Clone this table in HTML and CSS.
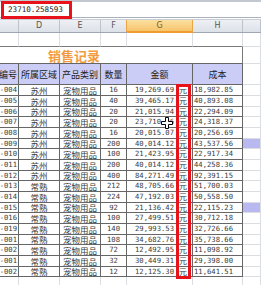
FILE: index.html
```html
<!DOCTYPE html>
<html>
<head>
<meta charset="utf-8">
<link rel="stylesheet" href="styles.css">
</head>
<body>
<div class="app">
  <div class="fbar"><span class="ftext">23710.258593</span></div>
  <div class="sheet">
    <div class="row colhdr">
      <div class="ch"></div><div class="ch">D</div><div class="ch">E</div><div class="ch pre">F</div><div class="ch sel">G</div><div class="ch">H</div><div class="ch"></div>
    </div>
    <div class="row blank">
      <div class="b"></div><div class="b"></div><div class="b"></div><div class="b"></div><div class="b"></div><div class="b"></div><div class="b lx"></div>
    </div>
    <div class="row titlerow">
      <div class="title">销售记录</div><div class="x"></div>
    </div>
    <div class="row thead">
      <div class="c">订单编号</div><div>所属区域</div><div>产品类别</div><div>数量</div><div>金额</div><div>成本</div><div class="x"></div>
    </div>
    <div class="tbody">
      <div class="row d"><div class="c">XS20-004</div><div class="r">苏州</div><div class="p">宠物用品</div><div class="q">16</div><div class="g"><span>19,269.69</span><i>元</i></div><div class="h">18,982.85</div><div class="x"></div></div>
      <div class="row d"><div class="c">XS20-005</div><div class="r">苏州</div><div class="p">宠物用品</div><div class="q">40</div><div class="g"><span>39,465.17</span><i>元</i></div><div class="h">40,893.08</div><div class="x"></div></div>
      <div class="row d"><div class="c">XS20-006</div><div class="r">苏州</div><div class="p">宠物用品</div><div class="q">20</div><div class="g"><span>21,015.94</span><i>元</i></div><div class="h">22,294.09</div><div class="x"></div></div>
      <div class="row d"><div class="c">XS20-007</div><div class="r">苏州</div><div class="p">宠物用品</div><div class="q">20</div><div class="g"><span>23,710.26</span><i>元</i></div><div class="h">24,318.37</div><div class="x"></div></div>
      <div class="row d"><div class="c">XS20-008</div><div class="r">苏州</div><div class="p">宠物用品</div><div class="q">16</div><div class="g"><span>20,015.07</span><i>元</i></div><div class="h">20,256.69</div><div class="x"></div></div>
      <div class="row d"><div class="c">XS20-009</div><div class="r">苏州</div><div class="p">宠物用品</div><div class="q">200</div><div class="g"><span>40,014.12</span><i>元</i></div><div class="h">43,537.56</div><div class="x hl"></div></div>
      <div class="row d"><div class="c">XS20-010</div><div class="r">苏州</div><div class="p">宠物用品</div><div class="q">100</div><div class="g"><span>21,423.95</span><i>元</i></div><div class="h">22,917.34</div><div class="x"></div></div>
      <div class="row d"><div class="c">XS20-011</div><div class="r">苏州</div><div class="p">宠物用品</div><div class="q">200</div><div class="g"><span>40,014.12</span><i>元</i></div><div class="h">44,258.36</div><div class="x"></div></div>
      <div class="row d"><div class="c">XS20-012</div><div class="r">苏州</div><div class="p">宠物用品</div><div class="q">400</div><div class="g"><span>84,271.49</span><i>元</i></div><div class="h">92,391.15</div><div class="x"></div></div>
      <div class="row d"><div class="c">XS20-013</div><div class="r">常熟</div><div class="p">宠物用品</div><div class="q">212</div><div class="g"><span>48,705.66</span><i>元</i></div><div class="h">51,700.03</div><div class="x"></div></div>
      <div class="row d"><div class="c">XS20-014</div><div class="r">常熟</div><div class="p">宠物用品</div><div class="q">224</div><div class="g"><span>47,192.03</span><i>元</i></div><div class="h">50,558.50</div><div class="x"></div></div>
      <div class="row d"><div class="c">XS20-015</div><div class="r">常熟</div><div class="p">宠物用品</div><div class="q">92</div><div class="g"><span>21,136.42</span><i>元</i></div><div class="h">22,115.23</div><div class="x hl"></div></div>
      <div class="row d"><div class="c">XS20-016</div><div class="r">常熟</div><div class="p">宠物用品</div><div class="q">100</div><div class="g"><span>27,499.51</span><i>元</i></div><div class="h">30,712.18</div><div class="x"></div></div>
      <div class="row d"><div class="c">XS20-019</div><div class="r">常熟</div><div class="p">宠物用品</div><div class="q">140</div><div class="g"><span>29,993.53</span><i>元</i></div><div class="h">32,726.66</div><div class="x"></div></div>
      <div class="row d"><div class="c">XS21-001</div><div class="r">常熟</div><div class="p">宠物用品</div><div class="q">108</div><div class="g"><span>34,682.76</span><i>元</i></div><div class="h">35,738.66</div><div class="x"></div></div>
      <div class="row d"><div class="c">XS21-002</div><div class="r">常熟</div><div class="p">宠物用品</div><div class="q">72</div><div class="g"><span>12,492.95</span><i>元</i></div><div class="h">11,098.92</div><div class="x"></div></div>
      <div class="row d"><div class="c">XS22-001</div><div class="r">常熟</div><div class="p">宠物用品</div><div class="q">32</div><div class="g"><span>30,449.31</span><i>元</i></div><div class="h">29,398.00</div><div class="x"></div></div>
      <div class="row d"><div class="c">XS22-002</div><div class="r">常熟</div><div class="p">宠物用品</div><div class="q">12</div><div class="g"><span>12,125.30</span><i>元</i></div><div class="h">11,641.51</div><div class="x"></div></div>
    </div>
    <div class="row blank2">
      <div class="b"></div><div class="b"></div><div class="b"></div><div class="b"></div><div class="b"></div><div class="b"></div><div class="b"></div>
    </div>
  </div>
  <div class="redbox top"></div>
  <div class="redbox col"></div>
  <svg class="cursor" width="12" height="12" viewBox="0 0 12 12"><polygon points="4.5,0.5 7.5,0.5 7.5,4.5 11.5,4.5 11.5,7.5 7.5,7.5 7.5,11.5 4.5,11.5 4.5,7.5 0.5,7.5 0.5,4.5 4.5,4.5" fill="#fff" stroke="#000" stroke-width="1"/></svg>
</div>
</body>
</html>
```

FILE: styles.css
```css
* { box-sizing: border-box; margin: 0; padding: 0; }
html, body { margin: 0; background: #fff; }
body {
  width: 261px;
  height: 285px;
  overflow: hidden;
  font-family: "Noto Sans CJK SC", "DejaVu Sans", sans-serif;
  color: #333;
}
.app { position: relative; width: 261px; height: 285px; overflow: hidden; }

.fbar {
  height: 18px;
  border-top: 2px solid #c3c8d0;
  border-bottom: 1px solid #aab2bd;
  margin-bottom: 1px;
  display: flex;
  align-items: center;
  padding-left: 8px;
}
.ftext { font-family: "DejaVu Sans Mono", monospace; font-size: 7.6px; color: #222; line-height: 1; }

.row {
  display: grid;
  grid-template-columns: 19px 41px 41px 26px 66px 50px 18px;
}
.row > div { overflow: hidden; white-space: nowrap; display: flex; align-items: center; justify-content: center; line-height: 1; }

.colhdr {
  height: 14px;
  background: linear-gradient(#eef0f4, #dce1e8);
  border-top: 1px solid #c9ced6;
  border-bottom: 1px solid #9ea6b1;
}
.ch {
  border-right: 1px solid #bcc3cd;
  font-family: "DejaVu Sans", sans-serif;
  font-size: 8px;
  color: #555;
}
.ch.pre { border-right-color: #eaa646; }
.ch.sel {
  background: linear-gradient(#fbe0a0, #f7c46c);
  color: #7a5a2a;
  border-right-color: #eaa646;
  border-bottom: 2px solid #f19c2e;
  margin-bottom: -1px;
}

.blank { height: 14px; }
.blank .b { border-right: 1px solid #dadde2; border-bottom: 1px solid #7a7a7a; }
.blank .lx { border-bottom-color: #dadde2; }

.titlerow { height: 17px; }
.row > .title {
  grid-column: 1 / 7;
  border-right: 1px solid #7a7a7a;
  border-bottom: 1px solid #666;
  justify-content: flex-start;
  padding-left: 48px;
  font-size: 13px;
  font-weight: bold;
  color: #f29b40;
}
.x { border-bottom: 1px solid #dadde2; border-right: 1px solid #dadde2; }

.thead { height: 21px; }
.thead > div:not(.x) {
  background: #cbcdf6;
  border-right: 1px solid #666;
  border-bottom: 1px solid #666;
  font-size: 9px;
  color: #222;
}
.thead > div.c { justify-content: flex-end; padding-right: 1px; }

.d { height: 11px; }
.d:nth-child(3n) { height: 10px; }
.d > div:not(.x) {
  border-right: 1px solid #666;
  border-bottom: 1px solid #666;
  font-size: 8.5px;
  color: #3a3a3a;
}
.d > div.c, .d > div.q, .d > div.g, .d > div.h {
  font-family: "DejaVu Sans Mono", monospace;
  font-size: 7.2px;
}
.d > div.c { justify-content: flex-end; padding-right: 1px; }
.d > div.g { justify-content: flex-end; padding-right: 4px; }
.d > div.g span { margin-right: 5px; }
.d > div.g i { font-style: normal; font-family: "Noto Sans CJK SC", sans-serif; font-size: 8px; width: 9px; }
.d > div.h { justify-content: flex-end; padding-right: 9px; }
.x.hl { background: #b9b9ef; }

.blank2 { height: 10px; }
.blank2 .b { border-right: 1px solid #dadde2; }

.redbox { position: absolute; border: 3px solid #e8121a; }
.redbox.top { left: 1px; top: 1px; width: 71px; height: 18px; }
.redbox.col { left: 176px; top: 84px; width: 15px; height: 195px; }
.cursor { position: absolute; left: 161px; top: 117px; }
```
